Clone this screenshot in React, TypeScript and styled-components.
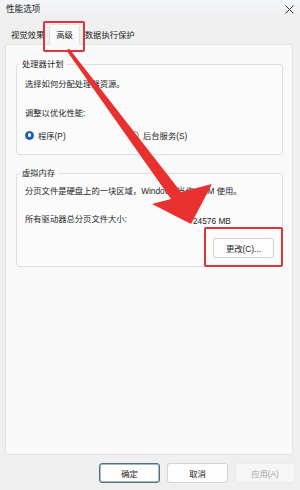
import React from "react";
import styled, { createGlobalStyle } from "styled-components";

const Global = createGlobalStyle`
  html, body { margin: 0; padding: 0; background: #efefef; }
  #root { width: 300px; height: 490px; overflow: hidden; }
  * { box-sizing: border-box; }
`;

const Window = styled.div`
  position: relative;
  width: 300px;
  height: 490px;
  display: flex;
  flex-direction: column;
  background: #efefef;
  font-family: "Liberation Sans", "Noto Sans CJK SC", sans-serif;
  font-size: 8.3px;
  color: #1c1c1c;
`;

const TitleBar = styled.div`
  height: 18px;
  display: flex;
  align-items: center;
  justify-content: space-between;
  padding: 0 6px 0 6px;
  background: linear-gradient(#f3f5fa, #efefef);
`;

const Title = styled.span`
  font-size: 8.6px;
  line-height: 18px;
`;

const TabStrip = styled.div`
  height: 26px;
  display: flex;
  align-items: flex-end;
  padding-left: 6px;
  position: relative;
  z-index: 1;
`;

const Tab = styled.div<{ $active?: boolean }>`
  height: ${(p) => (p.$active ? "21px" : "18px")};
  line-height: ${(p) => (p.$active ? "21px" : "16px")};
  padding: ${(p) => (p.$active ? "0 6px 0 6px" : "0 4px")};
  margin-bottom: ${(p) => (p.$active ? "-1px" : "0")};
  background: ${(p) => (p.$active ? "#f9f9f9" : "transparent")};
  border: ${(p) => (p.$active ? "1px solid #e2e2e2" : "1px solid transparent")};
  border-bottom: none;
  border-radius: 2px 2px 0 0;
  white-space: nowrap;
`;

const Panel = styled.div`
  flex: 1;
  margin: 0 7px 0 5px;
  padding: 13px 9px 0 10px;
  background: #f9f9f9;
  border: 1px solid #e3e3e3;
  border-radius: 2px;
  display: flex;
  flex-direction: column;
`;

const Group = styled.fieldset<{ $gap?: number }>`
  margin: ${(p) => p.$gap ?? 0}px 0 0 0;
  padding: 0 8px ${(p) => (p.$gap ? 8 : 12)}px 8px;
  border: 1px solid #dfdfdf;
  border-radius: 3px;
  background: #fbfbfb;
  min-width: 0;
`;

const Legend = styled.legend`
  margin-left: -6px;
  padding: 0 3px;
  line-height: 12px;
  font-size: 8.3px;
`;

const Line = styled.div<{ $mt: number }>`
  margin-top: ${(p) => p.$mt}px;
  line-height: 14px;
  white-space: nowrap;
`;

const RadioRow = styled.div`
  margin-top: 8px;
  height: 14px;
  display: flex;
  align-items: center;
`;

const RadioOption = styled.label<{ $width?: number }>`
  display: flex;
  align-items: center;
  gap: 4px;
  width: ${(p) => (p.$width ? `${p.$width}px` : "auto")};
`;

const RadioDot = styled.span<{ $checked?: boolean }>`
  width: 9px;
  height: 9px;
  border-radius: 50%;
  display: inline-flex;
  align-items: center;
  justify-content: center;
  background: ${(p) => (p.$checked ? "#1a5fb4" : "#ffffff")};
  border: 1px solid ${(p) => (p.$checked ? "#1a5fb4" : "#8a8a8a")};
  &::after {
    content: "";
    width: 3.5px;
    height: 3.5px;
    border-radius: 50%;
    background: ${(p) => (p.$checked ? "#ffffff" : "transparent")};
  }
`;

const SizeRow = styled.div`
  margin-top: 14px;
  line-height: 14px;
  display: grid;
  grid-template-columns: 168px auto;
  white-space: nowrap;
`;

const SizeValue = styled.span`
  padding-top: 2px;
`;

const ButtonRow = styled.div`
  margin-top: 10px;
  display: flex;
  justify-content: flex-end;
`;

const Button = styled.button<{ $primary?: boolean; $width?: number }>`
  width: ${(p) => p.$width ?? 61}px;
  height: 20px;
  padding: 0;
  font-family: inherit;
  font-size: 8.3px;
  color: ${(p) => (p.disabled ? "#a3a3a3" : "#1c1c1c")};
  background: ${(p) => (p.disabled ? "#f6f6f6" : "#fdfdfd")};
  border: 1px solid
    ${(p) => (p.$primary ? "#4f7282" : p.disabled ? "#ebebeb" : "#d3d3d3")};
  box-shadow: ${(p) => (p.$primary ? "inset 0 0 0 0.5px #4f7282" : "none")};
  border-radius: 3px;
`;

const Footer = styled.div`
  height: 35px;
  display: flex;
  justify-content: flex-end;
  align-items: flex-start;
  gap: 7px;
  padding: 8px 5px 0 0;
`;

const Annotation = styled.div<{ $x: number; $y: number; $w: number; $h: number }>`
  position: absolute;
  left: ${(p) => p.$x}px;
  top: ${(p) => p.$y}px;
  width: ${(p) => p.$w}px;
  height: ${(p) => p.$h}px;
  border: 2.5px solid #d9363e;
  border-radius: 2px;
  pointer-events: none;
  z-index: 5;
`;

const ArrowLayer = styled.svg`
  position: absolute;
  left: 0;
  top: 0;
  width: 300px;
  height: 490px;
  pointer-events: none;
  z-index: 6;
`;

export default function App() {
  return (
    <>
      <Global />
      <Window>
        <TitleBar>
          <Title>性能选项</Title>
          <svg width="9" height="9" viewBox="0 0 9 9">
            <path d="M0.5 0.5 L8.5 8.5 M8.5 0.5 L0.5 8.5" stroke="#333" strokeWidth="1" fill="none" />
          </svg>
        </TitleBar>
        <TabStrip>
          <Tab>视觉效果</Tab>
          <Tab $active>高级</Tab>
          <Tab>数据执行保护</Tab>
        </TabStrip>
        <Panel>
          <Group>
            <Legend>处理器计划</Legend>
            <Line $mt={7}>选择如何分配处理器资源。</Line>
            <Line $mt={15}>调整以优化性能:</Line>
            <RadioRow>
              <RadioOption $width={105}>
                <RadioDot $checked />
                程序(P)
              </RadioOption>
              <RadioOption>
                <RadioDot />
                后台服务(S)
              </RadioOption>
            </RadioRow>
          </Group>
          <Group $gap={12}>
            <Legend>虚拟内存</Legend>
            <Line $mt={5}>分页文件是硬盘上的一块区域，Windows 当作 RAM 使用。</Line>
            <SizeRow>
              <span>所有驱动器总分页文件大小:</span>
              <SizeValue>24576 MB</SizeValue>
            </SizeRow>
            <ButtonRow>
              <Button>更改(C)...</Button>
            </ButtonRow>
          </Group>
        </Panel>
        <Footer>
          <Button $primary>确定</Button>
          <Button>取消</Button>
          <Button $width={60} disabled>
            应用(A)
          </Button>
        </Footer>

        <Annotation $x={43} $y={21} $w={42} $h={31} />
        <Annotation $x={204} $y={227} $w={79} $h={40} />
        <ArrowLayer viewBox="0 0 300 490">
          <polygon
            points="67.5,49.5 69.5,49 181,192 212,184 191,224 152,204 171,199 66.5,50.5"
            fill="#e8302e"
          />
        </ArrowLayer>
      </Window>
    </>
  );
}
